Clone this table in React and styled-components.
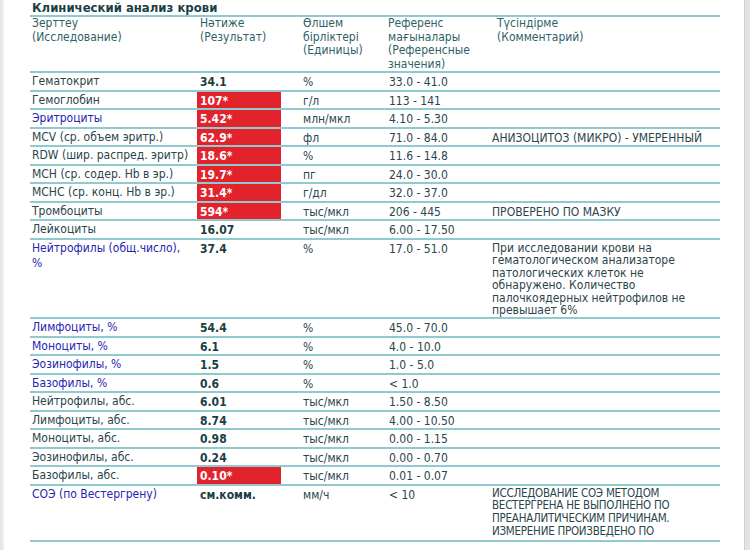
import React from "react";
import styled, { createGlobalStyle } from "styled-components";

const Global = createGlobalStyle`
  html, body { margin: 0; padding: 0; background: #fff; }
  body {
    font-family: "DejaVu Sans Condensed", "DejaVu Sans", sans-serif;
    font-size: 12px;
  }
`;

const LINE = "#8fcad1";
const COLS = "167px 103px 86px 104px 230px";

const Page = styled.div`
  display: flex;
  width: 750px;
  height: 550px;
  overflow: hidden;
`;

const LeftEdge = styled.div`
  width: 4px;
  flex: none;
  background: linear-gradient(to right, #e4e4e4, #f2f2f2);
`;

const RightEdge = styled.div`
  width: 5px;
  flex: none;
  background: #e3e3e3;
  border-left: 1px solid #d2d2d2;
`;

const Main = styled.div`
  flex: 1;
  padding-left: 26px;
`;

const Sheet = styled.div`
  width: 690px;
`;

const Title = styled.div`
  font-weight: bold;
  font-size: 13px;
  line-height: 15px;
  color: #1c3f46;
  padding-left: 2px;
  border-bottom: 2px solid ${LINE};
`;

const Row = styled.div`
  display: grid;
  grid-template-columns: ${COLS};
  min-height: 16.5px;
  border-bottom: 2px solid ${LINE};
`;

const HeaderRow = styled(Row)`
  padding: 0;
  color: #2f5f67;
  line-height: 13.5px;
`;

const HeadCell = styled.div`
  padding-left: ${(p) => p.$pad ?? 3}px;
`;

const Name = styled.div`
  padding: 1px 4px 0 2px;
  line-height: 15px;
  color: ${(p) => (p.$blue ? "#2525b2" : "#2a454b")};
`;

const Value = styled.div`
  padding: 2px 0 0 3px;
  margin-right: 19px;
  line-height: 14px;
  font-weight: bold;
  color: ${(p) => (p.$flag ? "#ffffff" : "#1a3d44")};
  background: ${(p) => (p.$flag ? "#e2232c" : "transparent")};
`;

const Plain = styled.div`
  padding: 2px 0 0 3px;
  line-height: 14px;
  color: #2a454b;
`;

const Comment = styled.div`
  padding: ${(p) => (p.$multi ? "2px 4px 0 2px" : "2px 0 0 2px")};
  line-height: ${(p) => (p.$multi ? "12.6px" : "14px")};
  color: #2a454b;
`;

const CapsNote = styled.div`
  padding: 1px 4px 2px 2px;
  font-size: 11.5px;
  letter-spacing: -0.25px;
  line-height: 12.8px;
  color: #2a454b;
  white-space: pre-line;
`;

const rows = [
  { name: "Гематокрит", value: "34.1", unit: "%", ref: "33.0 - 41.0" },
  { name: "Гемоглобин", value: "107*", flag: true, unit: "г/л", ref: "113 - 141" },
  { name: "Эритроциты", blue: true, value: "5.42*", flag: true, unit: "млн/мкл", ref: "4.10 - 5.30" },
  { name: "MCV (ср. объем эритр.)", value: "62.9*", flag: true, unit: "фл", ref: "71.0 - 84.0", comment: "АНИЗОЦИТОЗ (МИКРО) - УМЕРЕННЫЙ" },
  { name: "RDW (шир. распред. эритр)", value: "18.6*", flag: true, unit: "%", ref: "11.6 - 14.8" },
  { name: "MCH (ср. содер. Hb в эр.)", value: "19.7*", flag: true, unit: "пг", ref: "24.0 - 30.0" },
  { name: "MCHC (ср. конц. Hb в эр.)", value: "31.4*", flag: true, unit: "г/дл", ref: "32.0 - 37.0" },
  { name: "Тромбоциты", value: "594*", flag: true, unit: "тыс/мкл", ref: "206 - 445", comment: "ПРОВЕРЕНО ПО МАЗКУ" },
  { name: "Лейкоциты", value: "16.07", unit: "тыс/мкл", ref: "6.00 - 17.50" },
  {
    name: "Нейтрофилы (общ.число), %",
    blue: true,
    value: "37.4",
    unit: "%",
    ref: "17.0 - 51.0",
    comment:
      "При исследовании крови на гематологическом анализаторе патологических клеток не обнаружено. Количество палочкоядерных нейтрофилов не превышает 6%",
    multi: true,
  },
  { name: "Лимфоциты, %", blue: true, value: "54.4", unit: "%", ref: "45.0 - 70.0" },
  { name: "Моноциты, %", blue: true, value: "6.1", unit: "%", ref: "4.0 - 10.0" },
  { name: "Эозинофилы, %", blue: true, value: "1.5", unit: "%", ref: "1.0 - 5.0" },
  { name: "Базофилы, %", blue: true, value: "0.6", unit: "%", ref: "< 1.0" },
  { name: "Нейтрофилы, абс.", value: "6.01", unit: "тыс/мкл", ref: "1.50 - 8.50" },
  { name: "Лимфоциты, абс.", value: "8.74", unit: "тыс/мкл", ref: "4.00 - 10.50" },
  { name: "Моноциты, абс.", value: "0.98", unit: "тыс/мкл", ref: "0.00 - 1.15" },
  { name: "Эозинофилы, абс.", value: "0.24", unit: "тыс/мкл", ref: "0.00 - 0.70" },
  { name: "Базофилы, абс.", value: "0.10*", flag: true, unit: "тыс/мкл", ref: "0.01 - 0.07" },
  {
    name: "СОЭ (по Вестергрену)",
    blue: true,
    value: "см.комм.",
    unit: "мм/ч",
    ref: "< 10",
    caps:
      "ИССЛЕДОВАНИЕ СОЭ МЕТОДОМ\nВЕСТЕРГРЕНА НЕ ВЫПОЛНЕНО ПО\nПРЕАНАЛИТИЧЕСКИМ ПРИЧИНАМ.\nИЗМЕРЕНИЕ ПРОИЗВЕДЕНО ПО",
  },
];

export default function App() {
  return (
    <Page>
      <Global />
      <LeftEdge />
      <Main>
        <Sheet>
          <Title>Клинический анализ крови</Title>
          <HeaderRow>
            <HeadCell $pad={2}>
              Зерттеу
              <br />
              (Исследование)
            </HeadCell>
            <HeadCell>
              Нәтиже
              <br />
              (Результат)
            </HeadCell>
            <HeadCell>
              Өлшем
              <br />
              бірліктері
              <br />
              (Единицы)
            </HeadCell>
            <HeadCell $pad={2}>
              Референс
              <br />
              мағыналары
              <br />
              (Референсные
              <br />
              значения)
            </HeadCell>
            <HeadCell $pad={7}>
              Түсіндірме
              <br />
              (Комментарий)
            </HeadCell>
          </HeaderRow>
          {rows.map((r) => (
            <Row key={r.name}>
              <Name $blue={r.blue}>{r.name}</Name>
              <Value $flag={r.flag}>{r.value}</Value>
              <Plain>{r.unit}</Plain>
              <Plain>{r.ref}</Plain>
              {r.caps ? (
                <CapsNote>{r.caps}</CapsNote>
              ) : (
                <Comment $multi={r.multi}>{r.comment}</Comment>
              )}
            </Row>
          ))}
        </Sheet>
      </Main>
      <RightEdge />
    </Page>
  );
}
